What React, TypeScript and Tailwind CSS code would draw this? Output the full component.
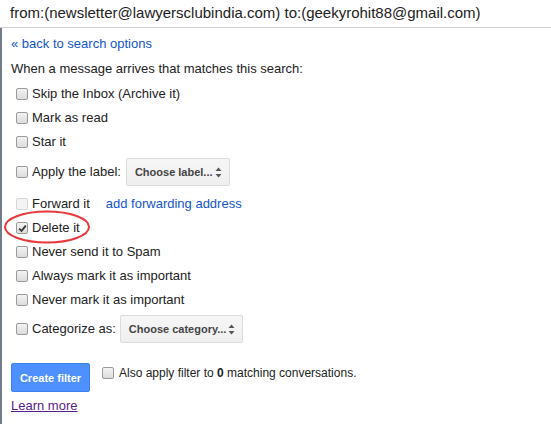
import React from "react";

function Box({ checked, disabled }: { checked?: boolean; disabled?: boolean }) {
  return (
    <span
      className={
        "relative inline-block w-[12px] h-[12px] shrink-0 rounded-[2px] border " +
        (disabled
          ? "border-[#d6d6d6] bg-[#f4f4f4]"
          : "border-[#9a9a9a] bg-gradient-to-b from-[#f3f3f3] to-[#dcdcdc]")
      }
    >
      {checked && (
        <svg className="absolute left-[1px] top-[1px]" width="9" height="9" viewBox="0 0 9 9">
          <path d="M1.2 4.6 L3.5 7 L7.8 1.6" fill="none" stroke="#333" strokeWidth="1.8" />
        </svg>
      )}
    </span>
  );
}

function Row({ label, checked, disabled, h = "h-[24px]", children }: { label: string; checked?: boolean; disabled?: boolean; h?: string; children?: React.ReactNode }) {
  return (
    <div className={"flex items-center " + h}>
      <span className="ml-[5px] flex">
        <Box checked={checked} disabled={disabled} />
      </span>
      <span className="ml-[4px]">{label}</span>
      {children}
    </div>
  );
}

function Select({ text, w }: { text: string; w: string }) {
  return (
    <div
      className={
        "flex items-center justify-between h-[28px] pl-[8px] pr-[7px] rounded-[2px] border border-[#dcdcdc] bg-gradient-to-b from-[#f6f6f6] to-[#efefef] text-[11px] font-bold text-[#444] " +
        w
      }
    >
      <span>{text}</span>
      <svg width="7" height="11" viewBox="0 0 7 11">
        <path d="M3.5 0.5 L6.5 4 L0.5 4 Z" fill="#555" />
        <path d="M0.5 7 L6.5 7 L3.5 10.5 Z" fill="#555" />
      </svg>
    </div>
  );
}

export default function App() {
  return (
    <div className="relative w-[551px] h-[424px] overflow-hidden bg-white text-[#222] text-[13px] font-['Liberation_Sans',Arial,sans-serif]">
      {/* Header */}
      <div className="h-[28px] border-b border-[#cfcfcf] pl-[10px] text-[15px] leading-[26px] text-[#222]">
        from:(newsletter@lawyersclubindia.com) to:(geekyrohit88@gmail.com)
      </div>

      <div className="h-[396px] border-l-2 border-[#747b89] pl-[9px] leading-[16px]">
        <div className="pt-[8px] text-[#1155cc]">« back to search options</div>
        <div className="mt-[9px]">When a message arrives that matches this search:</div>

        <div className="mt-[5px]">
          <Row label="Skip the Inbox (Archive it)" />
          <Row label="Mark as read" />
          <Row label="Star it" />
          <Row label="Apply the label:" h="h-[36px]">
            <span className="ml-[5px]">
              <Select text="Choose label..." w="w-[104px]" />
            </span>
          </Row>
          <Row label="Forward it" disabled h="h-[25px] mt-[1px]">
            <span className="ml-[16px] text-[#1155cc]">add forwarding address</span>
          </Row>
          <Row label="Delete it" checked />
          <Row label="Never send it to Spam" />
          <Row label="Always mark it as important" />
          <Row label="Never mark it as important" />
          <Row label="Categorize as:" h="h-[34px]">
            <span className="ml-[4px]">
              <Select text="Choose category..." w="w-[123px]" />
            </span>
          </Row>
        </div>

        <div className="mt-[17px] flex items-start">
          <button className="h-[29px] w-[79px] rounded-[2px] border border-[#3b82f0] bg-[#4d90fe] text-[11px] font-bold text-white">
            Create filter
          </button>
          <div className="ml-[12px] flex h-[20px] items-center">
            <Box />
            <span className="ml-[5px] text-[12px]">
              Also apply filter to <b>0</b> matching conversations.
            </span>
          </div>
        </div>

        <div className="mt-[6px]">
          <span className="text-[#5a1d8c] underline">Learn more</span>
        </div>
      </div>

      {/* Annotation ellipse */}
      <svg className="absolute left-[3px] top-[210px]" width="90" height="34" viewBox="0 0 90 34">
        <ellipse cx="44" cy="17" rx="42" ry="15.5" fill="none" stroke="#e8383c" strokeWidth="2" />
      </svg>
    </div>
  );
}
